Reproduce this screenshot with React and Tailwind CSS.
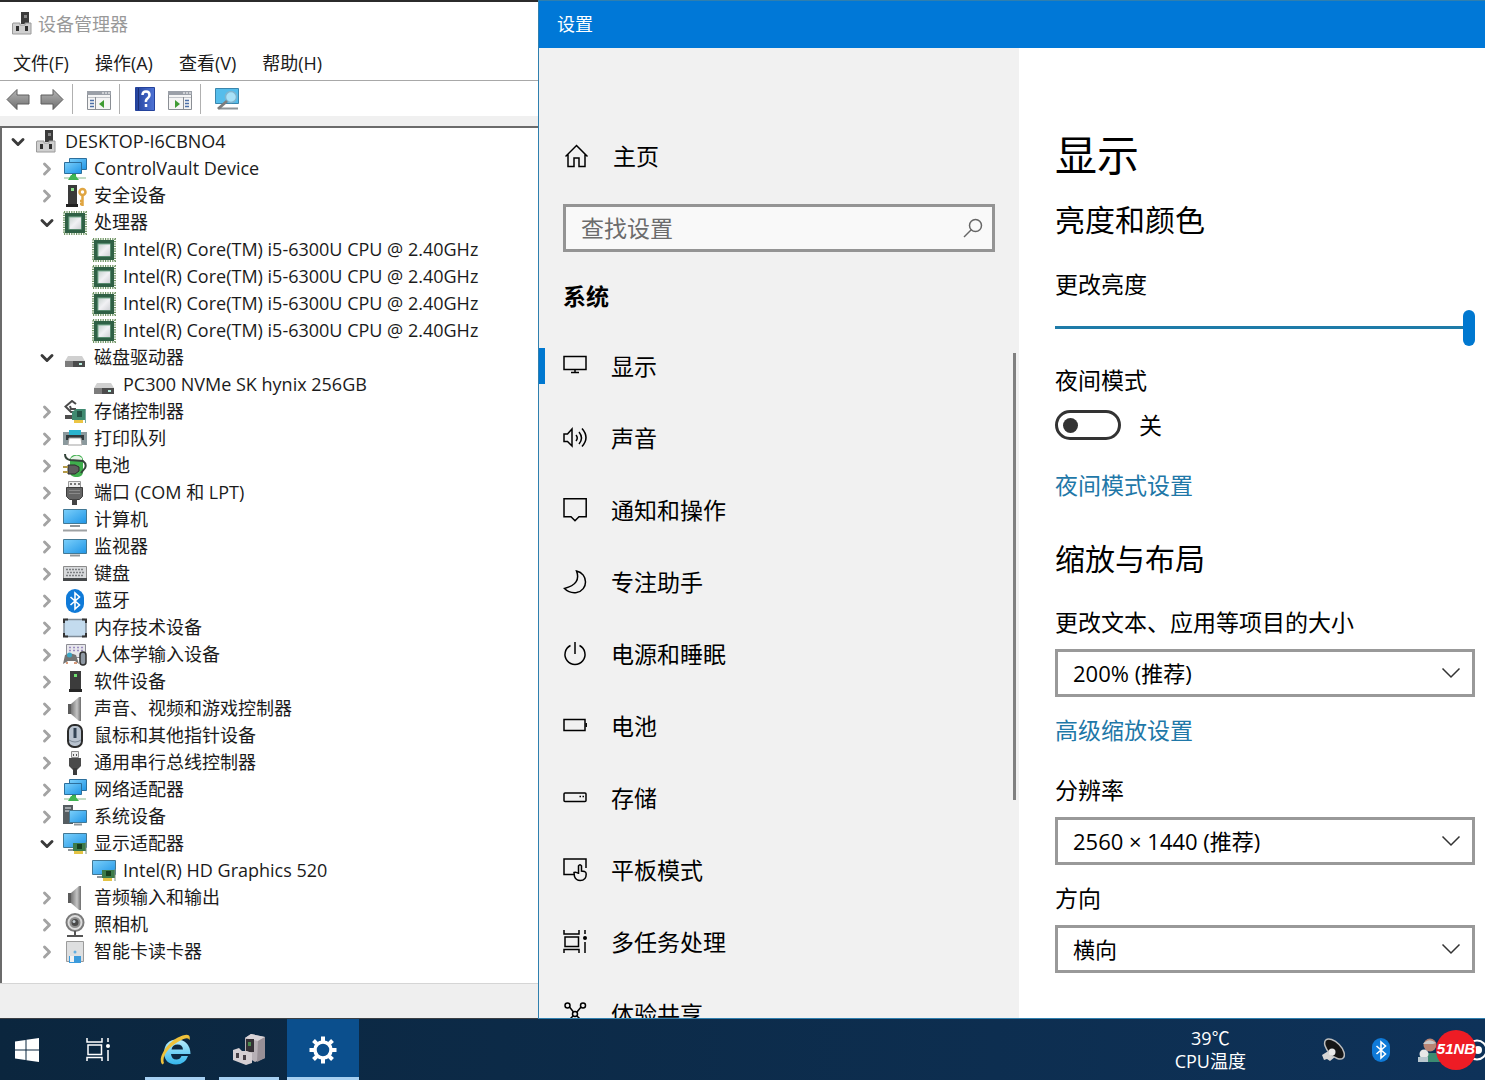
import React, { useState } from 'react';
import { ChevronDown, ChevronRight } from 'lucide-react';

/* ---------- Device icons (24 x 24) ---------- */

const Svg = ({ children, className = 'h-6 w-6', box = '0 0 24 24' }) => (
  <svg className={`shrink-0 ${className}`} viewBox={box} fill="none" aria-hidden="true">
    {children}
  </svg>
);

const Gradients = () => (
  <svg className="absolute h-0 w-0" aria-hidden="true">
    <defs>
      <linearGradient id="screen" x1="0" y1="0" x2="1" y2="1">
        <stop offset="0" stopColor="#7cd0fb" />
        <stop offset="1" stopColor="#1f95e6" />
      </linearGradient>
      <linearGradient id="metal" x1="0" y1="0" x2="1" y2="0">
        <stop offset="0" stopColor="#777" />
        <stop offset="0.6" stopColor="#c4c4c4" />
        <stop offset="1" stopColor="#6d6d6d" />
      </linearGradient>
      <linearGradient id="arrow" x1="0" y1="0" x2="0" y2="1">
        <stop offset="0" stopColor="#b5b5b5" />
        <stop offset="1" stopColor="#6f6f6f" />
      </linearGradient>
      <linearGradient id="help" x1="0" y1="0" x2="1" y2="0">
        <stop offset="0" stopColor="#24429c" />
        <stop offset="1" stopColor="#4f74d6" />
      </linearGradient>
      <linearGradient id="die" x1="0" y1="0" x2="1" y2="1">
        <stop offset="0" stopColor="#c9d3d0" />
        <stop offset="0.5" stopColor="#f1f1f4" />
        <stop offset="1" stopColor="#d0d2d6" />
      </linearGradient>
      <linearGradient id="explorer" gradientUnits="userSpaceOnUse" x1="0" y1="8" x2="0" y2="32">
        <stop offset="0" stopColor="#b5ecfd" />
        <stop offset="1" stopColor="#37b7ec" />
      </linearGradient>
    </defs>
  </svg>
);

const HostIcon = () => (
  <Svg>
    <path d="M11 0h8v12h-8z" fill="#3b3b3b" />
    <path d="M14 3h3v3h-3z" fill="#888" />
    <path d="M3 11h7v2h5v-2h6v11H2.500V12z" fill="#cfcfcf" stroke="#9a9a9a" />
    <path d="M6 14h3v5H6zM15 14h3v5h-3z" fill="#2f2f2f" />
  </Svg>
);

const NetworkIcon = () => (
  <Svg>
    <path d="M6.500 1.500h17v11h-17z" fill="url(#screen)" stroke="#2c6f9c" />
    <path d="M1.500 5.500h17v11h-17z" fill="url(#screen)" stroke="#2c6f9c" />
    <path d="M9 17h4v3H9z" fill="#36a84a" />
    <path d="M1 20h22v2H1z" fill="#c3dcc6" />
    <path d="m8 18h4l4 5H5z" fill="#41b552" />
  </Svg>
);

const SecurityIcon = () => (
  <Svg>
    <path d="M5 1h9v19H5z" fill="#3a3a3a" />
    <path d="M3 20h12v3H3z" fill="#222" />
    <path d="M8 4h3v3H8z" fill="#8de38d" />
    <circle cx="19.500" cy="8" r="3" stroke="#e0a541" strokeWidth="2.500" />
    <path d="M19.500 11v11M19.500 17h-2.500M19.500 20h-2.500" stroke="#e0a541" strokeWidth="2.500" />
  </Svg>
);

const ChipIcon = () => (
  <Svg>
    <rect x="1" y="1" width="22" height="22" stroke="#6f9463" strokeWidth="2" strokeDasharray="1.200 1.200" />
    <rect x="2" y="2" width="20" height="20" fill="#2f6045" />
    <rect x="5.500" y="5.500" width="13" height="13" fill="#7fb196" />
    <rect x="6.500" y="6.500" width="11.500" height="11.500" fill="url(#die)" />
  </Svg>
);

const DiskIcon = () => (
  <Svg>
    <path d="M5 10h14l3 5H2z" fill="#d0d0d0" />
    <path d="M2 15h20v6H2z" fill="#4b4b4b" />
    <path d="M2 15h8v6H2z" fill="#7c7c7c" />
    <path d="M16 17h3v2h-3z" fill="#b9f0e0" />
  </Svg>
);

const StorageIcon = () => (
  <Svg>
    <path d="m13 4-4-3-6.500 5.500L8 12h4M13 9H8L7 6" stroke="#4b4b4b" strokeWidth="2" />
    <path d="M2 15h9v4H2z" fill="#4f4f4f" />
    <path d="m9 12 4-3h10v11H9z" fill="#3f8a70" />
    <path d="M14 11h5v6h-5z" fill="#235345" />
    <path d="M11 20h9v3h-9z" fill="#ecc544" />
    <path d="M22.500 9v14" stroke="#77a7a0" />
  </Svg>
);

const PrinterIcon = () => (
  <Svg>
    <path d="M6 3h12v6H6z" fill="#2ab4ce" />
    <path d="M0 5h6v3h12V5h6v13H0z" fill="#8b999d" />
    <path d="M3 8h18v5H3z" fill="#323a3d" />
    <path d="M6 11h12l1 7H5z" fill="#fff" stroke="#a1a1a1" />
  </Svg>
);

const BatteryIcon = () => (
  <Svg>
    <rect x="7" y="1" width="13" height="22" rx="5" fill="#3fae4d" />
    <path d="M8 4q6-5 11 0v3H8z" fill="#e6f3e6" />
    <path d="M2 0q0 5 5 6l13 1q4 3 2 7l-4 5" stroke="#34443a" strokeWidth="2" />
    <path d="M5 11h7l4 2v4l-4 3H5z" fill="#5d5d5d" stroke="#2d2d2d" />
    <path d="M0 13h5M0 18h5" stroke="#b49a48" strokeWidth="2" />
  </Svg>
);

const PortIcon = () => (
  <Svg>
    <path d="M5.500.5h12v6h-12z" fill="#eee" stroke="#999" />
    <path d="M7 3h2M11 3h2M15 3h2" stroke="#777" strokeWidth="2" />
    <path d="M3.500 6.500h16v9l-3 3h-10l-3-3z" fill="#656565" stroke="#3d3d3d" />
    <path d="M6 9.500h11M6 12.500h11" stroke="#8a8a8a" />
    <path d="M9 18h5v6H9z" fill="#444" />
  </Svg>
);

const ComputerIcon = () => (
  <Svg>
    <path d="M.5 1.500h23v14H.5z" fill="url(#screen)" stroke="#427895" />
    <path d="M7 18h10" stroke="#8d9498" strokeWidth="2" />
    <path d="M0 22.500h24" stroke="#9ea1a3" strokeWidth="2" />
  </Svg>
);

const MonitorIcon = () => (
  <Svg>
    <path d="M.5 4.500h23v14H.5z" fill="url(#screen)" stroke="#427895" />
    <path d="M7 20.500h10" stroke="#8d9498" strokeWidth="2" />
  </Svg>
);

const KeyboardIcon = () => (
  <Svg>
    <path d="M.5 4.500h23v13H.5z" fill="#d8dadc" stroke="#8b8b8b" />
    <path d="M3 7.500h18M4 10.500h17M3 13.500h18" stroke="#7d8083" strokeWidth="1.500" strokeDasharray="2 1" />
    <path d="M0 16h24v3H0z" fill="#45484a" />
  </Svg>
);

const BluetoothIcon = () => (
  <Svg>
    <rect x="3" y="0" width="18" height="24" rx="9" fill="#0f7ad8" />
    <path d="m7.500 8 9 8-4.500 4V4l4.500 4-9 8" stroke="#fff" strokeWidth="1.600" />
  </Svg>
);

const MemoryIcon = () => (
  <Svg>
    <rect x="1" y="3.500" width="22" height="17" rx="2" fill="#c3dbee" stroke="#7f8c98" strokeWidth="1.500" />
    <path d="M1 7V3.500h4M19 3.500h4V7M23 17v3.500h-4M5 20.500H1V17" stroke="#333" strokeWidth="2" />
  </Svg>
);

const HidIcon = () => (
  <Svg>
    <path d="M3.500 1.500h19v13h-19z" fill="#e7e7ec" stroke="#8d8d94" />
    <path d="M6 4.500h14M6 7.500h14" stroke="#9a8dc0" strokeWidth="1.500" strokeDasharray="2 2" />
    <path d="m0 21 2-9q5-3 11 0l3 9-4-3H5z" fill="#747474" />
    <circle cx="6.500" cy="12" r="2.500" fill="#3ba6c4" />
    <path d="M3 20h2M11 20h3" stroke="#d79a79" strokeWidth="2" />
    <rect x="17" y="9" width="6" height="13" rx="3" fill="#8e98a3" stroke="#2f2f2f" strokeWidth="1.500" />
  </Svg>
);

const SoftwareIcon = () => (
  <Svg>
    <path d="M7 1h11v18H7z" fill="#3c3c3c" />
    <path d="M11 4h3v3h-3z" fill="#6fe06f" />
    <path d="M6 19h13v3H6z" fill="#262626" />
  </Svg>
);

const SpeakerIcon = () => (
  <Svg>
    <path d="M5 7h4v10H5z" fill="#5b5b5b" />
    <path d="m8 7 8-7h2v24h-2l-8-7z" fill="url(#metal)" />
  </Svg>
);

const MouseIcon = () => (
  <Svg>
    <rect x="5" y="1" width="14" height="22" rx="6" fill="#b8c2ce" stroke="#2b2b2b" strokeWidth="2" />
    <path d="M12 4v10" stroke="#334354" strokeWidth="3" />
    <path d="M6 16q6 4 12 0" stroke="#7e8a98" />
  </Svg>
);

const UsbIcon = () => (
  <Svg>
    <path d="M8.500.5h7v6h-7z" fill="#ececec" stroke="#8c8c8c" />
    <path d="M10 4h1M13 4h1" stroke="#555" strokeWidth="2" />
    <path d="M6 7h12v8l-4 4h-4l-4-4z" fill="#4b4b4b" />
    <path d="M12 17v7" stroke="#3c3c3c" strokeWidth="4" />
  </Svg>
);

const SystemIcon = () => (
  <Svg>
    <path d="M0 0h10v19H0z" fill="#555d61" />
    <path d="M2 3h6M2 6h6" stroke="#b9bfc2" strokeWidth="1.500" />
    <path d="M6.500 5.500h17v12h-17z" fill="url(#screen)" stroke="#427895" />
    <path d="M11 19.500h8" stroke="#8d9498" strokeWidth="2" />
  </Svg>
);

const DisplayAdapterIcon = () => (
  <Svg>
    <path d="M.5 1.500h23v14H.5z" fill="url(#screen)" stroke="#427895" />
    <path d="M5 18h5" stroke="#8d9498" strokeWidth="2" />
    <path d="M10 11h13v8H10z" fill="#3d7b4a" />
    <path d="M14 12h5v5h-5z" fill="#173f20" />
    <path d="M11 19h9v3h-9z" fill="#e3c344" />
    <path d="M23 10v12" stroke="#7b8f7f" />
  </Svg>
);

const CameraIcon = () => (
  <Svg>
    <circle cx="12" cy="9.500" r="8.500" fill="#dcdcdc" stroke="#7b7b7b" strokeWidth="2" />
    <circle cx="12" cy="9.500" r="4.500" fill="#4a4a4a" stroke="#8e8e8e" strokeWidth="2" />
    <circle cx="11" cy="8.500" r="1.500" fill="#c4ccd2" />
    <path d="M12 18v4M4 23h16" stroke="#555" strokeWidth="2" />
  </Svg>
);

const SmartCardIcon = () => (
  <Svg>
    <path d="M3.500 1.500h17v20h-17z" fill="#dedfe0" stroke="#9b9b9b" />
    <circle cx="12" cy="12" r="1.500" fill="#63aee0" />
    <path d="M6 16h12v7H6z" fill="#3c9bdc" />
    <path d="M7 16h4v6H7z" fill="#f3f3f3" />
  </Svg>
);

/* ---------- Device manager ---------- */

const cpu = { label: 'Intel(R) Core(TM) i5-6300U CPU @ 2.40GHz', icon: ChipIcon };

const categories = [
  { label: 'ControlVault Device', icon: NetworkIcon },
  { label: '安全设备', icon: SecurityIcon },
  { label: '处理器', icon: ChipIcon, devices: [cpu, cpu, cpu, cpu] },
  { label: '磁盘驱动器', icon: DiskIcon, devices: [{ label: 'PC300 NVMe SK hynix 256GB', icon: DiskIcon }] },
  { label: '存储控制器', icon: StorageIcon },
  { label: '打印队列', icon: PrinterIcon },
  { label: '电池', icon: BatteryIcon },
  { label: '端口 (COM 和 LPT)', icon: PortIcon },
  { label: '计算机', icon: ComputerIcon },
  { label: '监视器', icon: MonitorIcon },
  { label: '键盘', icon: KeyboardIcon },
  { label: '蓝牙', icon: BluetoothIcon },
  { label: '内存技术设备', icon: MemoryIcon },
  { label: '人体学输入设备', icon: HidIcon },
  { label: '软件设备', icon: SoftwareIcon },
  { label: '声音、视频和游戏控制器', icon: SpeakerIcon },
  { label: '鼠标和其他指针设备', icon: MouseIcon },
  { label: '通用串行总线控制器', icon: UsbIcon },
  { label: '网络适配器', icon: NetworkIcon },
  { label: '系统设备', icon: SystemIcon },
  { label: '显示适配器', icon: DisplayAdapterIcon, devices: [{ label: 'Intel(R) HD Graphics 520', icon: DisplayAdapterIcon }] },
  { label: '音频输入和输出', icon: SpeakerIcon },
  { label: '照相机', icon: CameraIcon },
  { label: '智能卡读卡器', icon: SmartCardIcon },
];

const TreeRow = ({ label, icon: Icon, indent, open, leaf, onClick }) => (
  <button type="button" onClick={onClick} className={`flex h-[27px] w-full items-center text-left ${indent}`}>
    <span className="mr-1 flex w-6 shrink-0 justify-center">
      {!leaf && open && <ChevronDown className="h-5 w-5 text-[#3a3a3a]" strokeWidth={3.5} />}
      {!leaf && !open && <ChevronRight className="h-5 w-5 text-[#a3a3a3]" strokeWidth={3.5} />}
    </span>
    <Icon />
    <span className="ml-[7px] whitespace-nowrap">{label}</span>
  </button>
);

const Category = ({ item }) => {
  const [open, setOpen] = useState(Boolean(item.devices));
  return (
    <li>
      <TreeRow {...item} indent="pl-[33px]" open={open && Boolean(item.devices)} onClick={() => setOpen(!open)} />
      {open && item.devices && (
        <ul>
          {item.devices.map((device, i) => (
            <li key={i}>
              <TreeRow {...device} indent="pl-[62px]" leaf />
            </li>
          ))}
        </ul>
      )}
    </li>
  );
};

const ConsoleIcon = ({ flip }) => (
  <Svg>
    <path d="M.5 4.500h23v18H.5z" fill="#f5f5f5" stroke="#8a8e94" />
    <path d="M0 4h24v4H0z" fill="#9ba0a8" />
    <path d="M15 6h2M18 6h2M21 6h2" stroke="#fff" />
    <path d="M1 10.500h22" stroke="#c2c5ca" />
    <g transform={flip ? 'translate(24 0) scale(-1 1)' : undefined}>
      <path d="M8.500 10v12" stroke="#8a8e94" />
      <path d="M3 13.500h4M3 16.500h4M3 19.500h4" stroke="#4c6fa8" strokeWidth="1.500" />
      <path d="m12 17 5-4v8z" fill="#3f9b33" />
    </g>
  </Svg>
);

const ArrowIcon = ({ flip }) => (
  <Svg>
    <path
      transform={flip ? 'translate(24 0) scale(-1 1)' : undefined}
      d="M1 12.500 11 2.500V8h12v9H11v5.500z"
      fill="url(#arrow)"
      stroke="#5e5e5e"
    />
  </Svg>
);

const ToolButton = ({ label, children }) => (
  <button type="button" aria-label={label} className="flex shrink-0 items-center">
    {children}
  </button>
);

const DeviceManager = () => {
  const [open, setOpen] = useState(true);
  return (
    <section className="flex min-w-0 flex-col overflow-hidden border-t-2 border-[#2b2b2b] bg-white text-[18px] text-[#1b1b1b]">
      {/* Title bar */}
      <header className="flex h-11 shrink-0 items-center gap-1 pl-[10px] text-[#999]">
        <HostIcon />
        <h1>设备管理器</h1>
      </header>

      {/* Menu bar */}
      <nav className="flex h-[34px] shrink-0 items-center gap-[26px] pl-[13px]">
        {['文件(F)', '操作(A)', '查看(V)', '帮助(H)'].map((item) => (
          <button key={item} type="button">{item}</button>
        ))}
      </nav>

      {/* Toolbar */}
      <div className="flex h-9 shrink-0 items-center border-t border-[#a8a8a8] pl-[6px]">
        <div className="flex gap-[10px] pr-2">
          <ToolButton label="后退"><ArrowIcon /></ToolButton>
          <ToolButton label="前进"><ArrowIcon flip /></ToolButton>
        </div>
        <div className="flex h-[30px] items-center border-l border-[#b0b0b0] pr-2 pl-[14px]">
          <ToolButton label="显示控制台树"><ConsoleIcon flip={false} /></ToolButton>
        </div>
        <div className="flex h-[30px] items-center gap-[11px] border-l border-[#b0b0b0] pr-2 pl-[13px]">
          <ToolButton label="帮助">
            <Svg>
              <path d="M2.500.5h19v23h-19z" fill="url(#help)" stroke="#24429c" />
              <path d="M5.500 1v22" stroke="#1b3076" />
              <path d="M9.500 8q0-3.500 3.500-3.500T16.500 8q0 2-2 3.500T13 15M13 17v3" stroke="#fff" strokeWidth="2.500" />
            </Svg>
          </ToolButton>
          <ToolButton label="操作"><ConsoleIcon flip /></ToolButton>
        </div>
        <div className="flex h-[30px] items-center border-l border-[#b0b0b0] pl-[13px]">
          <ToolButton label="扫描检测硬件改动">
            <Svg className="h-6 w-[26px]" box="0 0 26 24">
              <path d="M1.500 1.500h23v15h-23z" fill="#55bdeb" stroke="#3a86ad" />
              <path d="M6 21.500h18" stroke="#8d9498" strokeWidth="2" />
              <circle cx="17" cy="10" r="5.500" fill="#a9e1f7" stroke="#7fb5cf" strokeWidth="1.500" />
              <path d="m13 14-9 8" stroke="#7d7d7d" strokeWidth="3" />
            </Svg>
          </ToolButton>
        </div>
      </div>

      {/* Device tree */}
      <div className="min-h-0 flex-1 overflow-hidden border-t-[10px] border-[#f0f0f0]">
        <div className="h-full border-t-2 border-l-2 border-[#6b6b6b] bg-white">
          <TreeRow label="DESKTOP-I6CBNO4" icon={HostIcon} indent="pl-1" open={open} onClick={() => setOpen(!open)} />
          {open && (
            <ul>
              {categories.map((item) => (
                <Category key={item.label} item={item} />
              ))}
            </ul>
          )}
        </div>
      </div>

      {/* Status bar */}
      <footer className="h-9 shrink-0 border-t border-b border-t-[#d5d5d5] border-b-[#3a3f44] bg-[#efefef]" />
    </section>
  );
};

/* ---------- Settings ---------- */

const LineIcon = ({ children }) => (
  <svg
    className="h-6 w-6 shrink-0"
    viewBox="0 0 24 24"
    fill="none"
    stroke="currentColor"
    strokeWidth="1.500"
    aria-hidden="true"
  >
    {children}
  </svg>
);

const TaskViewShape = () => (
  <>
    <path d="M1 0v4h15V0M1 23v-3.500h15V23M2 7h13.500v9.500H2zM22 0v4M22 12v11" />
    <circle cx="22" cy="8" r="2" fill="currentColor" stroke="none" />
  </>
);

const menu = [
  { label: '显示', icon: <path d="M1 2.500h22v13H1zM12 15.500V18M8 18.500h8" /> },
  {
    label: '声音',
    icon: <path d="M1 8h3.500L9 3v17l-4.500-4.500H1zM13 9q2.500 3 0 6M16 6q5 6 0 12M19 2.500q8 9 0 18" />,
  },
  { label: '通知和操作', icon: <path d="M1 .8h22.200v18H16l-4 4-4-4H1z" /> },
  { label: '专注助手', icon: <path d="M13.500 1q5 13-12 17.500 5 5 12 4c12-2 12-19 0-21.500z" /> },
  { label: '电源和睡眠', icon: <path d="M12 0v12M7.500 3.500a10 10 0 1 0 9 0" /> },
  {
    label: '电池',
    icon: (
      <>
        <path d="M1 5.500h21v11H1z" />
        <path d="M23.200 9v4" />
      </>
    ),
  },
  {
    label: '存储',
    icon: (
      <>
        <rect x="1" y="7" width="22" height="8.500" rx="1" />
        <path d="M16.500 10.500H18M19.500 10.500H21" />
      </>
    ),
  },
  {
    label: '平板模式',
    icon: (
      <>
        <path d="M11 16.500H1V1h22v9" />
        <path d="M15.500 16V8q1.500-2.500 3 0v5l3 .5q1.700.5 1.700 2.500 0 6.500-6 6.500-4.200 0-5.700-4l-.5-4q2-1 4.500 1" />
      </>
    ),
  },
  { label: '多任务处理', icon: <TaskViewShape /> },
  {
    label: '体验共享',
    icon: (
      <>
        <circle cx="4.500" cy="3.500" r="2.500" />
        <circle cx="20" cy="3.500" r="2.500" />
        <circle cx="12" cy="12" r="2.500" />
        <circle cx="4.500" cy="20" r="2.500" />
        <circle cx="20" cy="20" r="2.500" />
        <path d="m6.500 5 4 5M18 5l-4 5M10 14l-4 4M14 14l4 4" />
      </>
    ),
  },
];

const SelectField = ({ id, label, options }) => (
  <div className="flex flex-col gap-3">
    <label htmlFor={id} className="leading-[30px]">{label}</label>
    <div className="relative">
      <select id={id} className="h-12 w-full appearance-none border-[3px] border-[#999] bg-white pr-12 pl-[15px] text-[22px]">
        {options.map((option) => (
          <option key={option}>{option}</option>
        ))}
      </select>
      <svg
        className="pointer-events-none absolute top-4 right-[14px] h-4 w-5"
        viewBox="0 0 20 16"
        fill="none"
        stroke="#333"
        strokeWidth="1.500"
        aria-hidden="true"
      >
        <path d="m1.500 3.500 8.500 8.500 8.500-8.500" />
      </svg>
    </div>
  </div>
);

const Settings = () => {
  const [active, setActive] = useState('显示');
  const [brightness, setBrightness] = useState(100);
  const [nightLight, setNightLight] = useState(false);

  return (
    <section className="flex min-w-0 flex-col overflow-hidden border-y border-l border-[#2f7fae] bg-white text-[23px] text-black">
      <header className="flex h-[47px] shrink-0 items-center bg-[#0078d7] pl-[18px] text-[18px] text-white">设置</header>

      <div className="grid min-h-0 flex-1 grid-cols-[480fr_466fr]">
        {/* Sidebar */}
        <aside className="flex min-h-0 flex-col bg-[#f1f1f1] pt-[84px]">
          <a href="#home" className="flex h-12 shrink-0 items-center gap-6 pl-[26px]">
            <LineIcon>
              <path d="M.5 12.500 11.500 1.500l11 11M3 10.500v12h6v-8.500h5v8.500h6v-12" />
            </LineIcon>
            主页
          </a>
          <div className="relative mx-6 mt-6 shrink-0">
            <input
              type="search"
              aria-label="查找设置"
              placeholder="查找设置"
              className="h-12 w-full appearance-none border-[3px] border-[#949494] bg-[#f9f9f9] pr-12 pl-[15px] placeholder:text-[#6c6c6c]"
            />
            <svg
              className="pointer-events-none absolute top-[14px] right-3 h-5 w-5"
              viewBox="0 0 20 20"
              fill="none"
              stroke="#666"
              strokeWidth="1.500"
              aria-hidden="true"
            >
              <circle cx="12.500" cy="7.500" r="6" />
              <path d="M8.500 11.500 1 19" />
            </svg>
          </div>
          <h2 className="mt-[29px] shrink-0 pl-6 leading-[30px] font-bold">系统</h2>

          <nav className="relative mt-[19px] min-h-0 flex-1 overflow-hidden">
            <ul>
              {menu.map(({ label, icon }) => (
                <li key={label} className="relative">
                  <button type="button" onClick={() => setActive(label)} className="flex h-[72px] w-full items-center gap-6 pl-6">
                    <LineIcon>{icon}</LineIcon>
                    {label}
                  </button>
                  {active === label && <span className="absolute top-[18px] left-0 h-9 w-[6px] bg-[#0078d0]" />}
                </li>
              ))}
            </ul>
            <span className="absolute top-[23px] right-[3px] h-[447px] w-[3px] bg-[#808080]" />
          </nav>
        </aside>

        {/* Display page */}
        <main className="min-h-0 overflow-hidden pt-[77px] pr-[10px] pl-9">
          <h1 className="text-[42px] leading-[60px]">显示</h1>
          <h2 className="mt-[15px] text-[30px] leading-10">亮度和颜色</h2>

          <label htmlFor="brightness" className="mt-[29px] block leading-[30px]">更改亮度</label>
          <input
            id="brightness"
            type="range"
            min="0"
            max="100"
            value={brightness}
            onChange={(e) => setBrightness(Number(e.target.value))}
            className="mt-[10px] block h-9 w-full appearance-none bg-transparent [&::-webkit-slider-runnable-track]:h-[3px] [&::-webkit-slider-runnable-track]:bg-[#1e7ba8] [&::-webkit-slider-thumb]:mt-[-16px] [&::-webkit-slider-thumb]:h-9 [&::-webkit-slider-thumb]:w-3 [&::-webkit-slider-thumb]:appearance-none [&::-webkit-slider-thumb]:rounded-full [&::-webkit-slider-thumb]:bg-[#0078d0]"
          />

          <label htmlFor="night" className="mt-5 block leading-[30px]">夜间模式</label>
          <div className="mt-[15px] flex items-center gap-[18px] leading-[30px]">
            <input
              id="night"
              type="checkbox"
              checked={nightLight}
              onChange={(e) => setNightLight(e.target.checked)}
              className="flex h-[30px] w-[66px] shrink-0 appearance-none items-center rounded-full border-[3px] border-[#333] px-[5px] before:h-[15px] before:w-[15px] before:rounded-full before:bg-[#333] checked:justify-end"
            />
            <span>{nightLight ? '开' : '关'}</span>
          </div>
          <a href="#night-settings" className="mt-[30px] block leading-[30px] text-[#1f78a8]">夜间模式设置</a>

          <h2 className="mt-[39px] mb-7 text-[30px] leading-10">缩放与布局</h2>
          <SelectField id="scale" label="更改文本、应用等项目的大小" options={['200% (推荐)', '175%', '150%']} />
          <a href="#scaling" className="mt-[18px] mb-[30px] block leading-[30px] text-[#1f78a8]">高级缩放设置</a>
          <div className="flex flex-col gap-[18px]">
            <SelectField id="resolution" label="分辨率" options={['2560 × 1440 (推荐)', '1920 × 1080']} />
            <SelectField id="orientation" label="方向" options={['横向', '纵向']} />
          </div>
        </main>
      </div>
    </section>
  );
};

/* ---------- Taskbar ---------- */

const TaskButton = ({ label, active, line, children }) => (
  <button
    type="button"
    aria-label={label}
    className={`relative flex h-full w-[72px] items-center justify-center ${active ? 'bg-[#0b4f8d]' : ''}`}
  >
    {children}
    {line && <span className={`absolute bottom-0 h-[3px] bg-[#a6d0f2] ${line}`} />}
  </button>
);

const Taskbar = () => (
  <footer className="flex h-[61px] shrink-0 items-center overflow-hidden bg-linear-to-r from-[#0b263e] to-[#0e3259] text-white">
    <button type="button" aria-label="开始" className="flex h-full w-[54px] shrink-0 items-center justify-center">
      <Svg>
        <path d="M0 3.500 10.500 2v9.500H0zM11.500 1.800 24 0v11.500H11.500zM0 12.500h10.500V22L0 20.500zM11.500 12.500H24V24l-12.500-1.800z" fill="#fff" />
      </Svg>
    </button>
    <div className="ml-2 h-full shrink-0">
      <TaskButton label="任务视图">
        <LineIcon><TaskViewShape /></LineIcon>
      </TaskButton>
    </div>
    <div className="ml-[5px] flex h-full shrink-0 gap-[2px]">
      <TaskButton label="Internet Explorer" line="inset-x-[6px]">
        <Svg className="h-9 w-9" box="0 0 36 36">
          <path d="M31 24q-3 8.500-12 8.500Q7 32 7 20 8 8 19.500 7.500 33 8 33.500 22H14q.5 5.500 5.500 5.500 3.500 0 5-3.500zM14.500 17.500H26q-.5-5-5.500-5t-6 5z" fill="url(#explorer)" />
          <path d="M5.500 32.500C-1 27 12 6 28 3q6-1 4.500 5-1-3-6-1C14 12 4 24 7 31z" fill="#eec13b" />
        </Svg>
      </TaskButton>
      <TaskButton label="设备管理器" line="inset-x-[6px]">
        <Svg className="h-9 w-9" box="0 0 36 36">
          <path d="m14 6 6-4 14 3v21l-10 4-10-6z" fill="#b7b0b6" />
          <path d="m14 6 6-4 14 3-7 4z" fill="#d8d3d7" />
          <path d="m27 9 7-4v21l-8 4z" fill="#989097" />
          <path d="M15 7h8v13h-8z" fill="#343036" />
          <path d="M17 10h3v4h-3z" fill="#4a8a4f" />
          <path d="m2 18 6-2 3 3h5l5 2v10l-6 2L2 28z" fill="#d5cfd3" />
          <path d="M5 21h3v5H5zM12 23h3v5h-3z" fill="#463f45" />
        </Svg>
      </TaskButton>
      <TaskButton label="设置" active line="inset-x-0">
        <Svg className="h-7 w-7" box="0 0 28 28">
          <circle cx="14" cy="14" r="8" stroke="#fff" strokeWidth="3.500" />
          <path
            d="M14 .5V5M14 23v4.500M.5 14H5M23 14h4.500M4.500 4.500l3.200 3.200M20.300 20.300l3.200 3.200M4.500 23.500l3.200-3.200M20.300 7.700l3.200-3.200"
            stroke="#fff"
            strokeWidth="4"
          />
        </Svg>
      </TaskButton>
    </div>

    {/* Notification area */}
    <div className="ml-auto flex shrink-0 items-center">
      <div className="mr-[75px] text-center text-[18px] leading-[23px]">
        <p>39℃</p>
        <p>CPU温度</p>
      </div>
      <div className="mr-6 flex gap-6">
        <Svg>
          <path d="m1 17 8-5 5 7-5 4-3-2-3 1z" fill="#d5d5d5" />
          <ellipse cx="13.500" cy="11" rx="6.500" ry="12.500" transform="rotate(-44 13.500 11)" fill="#161616" stroke="#bdbdbd" strokeWidth="1.500" />
          <circle cx="11" cy="14" r="3.500" fill="#e9e9e9" />
        </Svg>
        <BluetoothIcon />
      </div>
      <div className="relative flex h-10 w-[68px] items-center justify-between">
        <Svg>
          <path d="M1 24q0-8 9-9h14v9z" fill="#3c8b72" />
          <circle cx="13" cy="7" r="6.500" fill="#b98575" />
          <path d="M6 6q6-7 13-1l-3 1H8z" fill="#c9c9c9" />
          <circle cx="7" cy="16" r="4.500" fill="#e8e8e8" />
          <path d="M1 19h10v5H1z" fill="#b9c7cf" />
        </Svg>
        <Svg className="h-[22px] w-[18px]" box="0 0 18 22">
          <circle cx="10" cy="11" r="9.500" stroke="#fff" strokeWidth="2" />
          <circle cx="11" cy="11" r="4" fill="#fff" />
        </Svg>
        <span className="absolute left-[19px] flex h-10 w-10 items-center justify-center rounded-full bg-[#ee1c25] font-['Liberation_Sans'] text-[15px] font-bold italic">
          51NB
        </span>
      </div>
    </div>
  </footer>
);

export default function App() {
  return (
    <div className="flex h-screen flex-col overflow-hidden font-['Open_Sans','Noto_Sans_CJK_SC',sans-serif]" lang="zh-CN">
      <Gradients />
      <div className="grid min-h-0 flex-1 grid-cols-[538fr_947fr]">
        <DeviceManager />
        <Settings />
      </div>
      <Taskbar />
    </div>
  );
}
